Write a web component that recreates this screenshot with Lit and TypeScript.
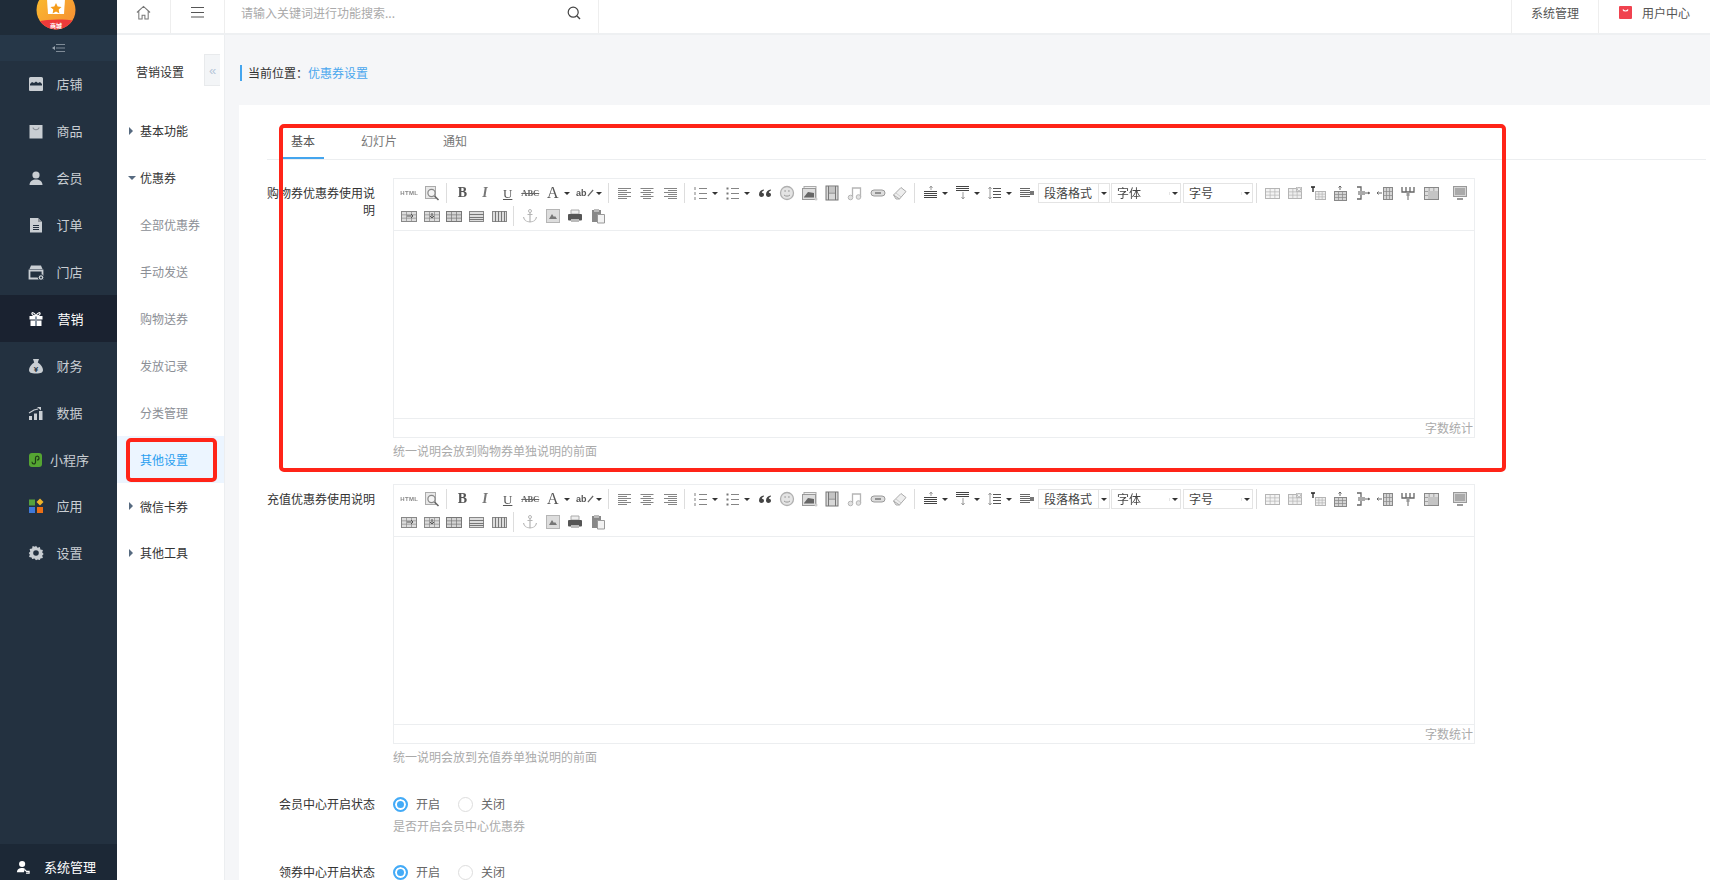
import { LitElement, html, css, svg } from "lit";
import { customElement } from "lit/decorators.js";

const C = "#c9ced3";
const D = "#233140";
const G = "#858585";

const sideIcons: Record<string, unknown> = {
  store: svg`<path d="M2.500 1h11A1.500 1.500 0 0 1 15 2.500V14a1 1 0 0 1-1 1H2a1 1 0 0 1-1-1V2.500A1.500 1.500 0 0 1 2.500 1z" fill="${C}"/><path d="M2 8l2-2 2 1 2-1.500 2 1.500 2-1 2 2v1.500H2z" fill="${D}"/>`,
  bag: svg`<path d="M1.500 2h13v13.500h-13z" fill="${C}"/><path d="M5 4.500c.5 3 5.500 3 6 0" fill="none" stroke="#8b9198" stroke-width="1.100"/>`,
  user: svg`<circle cx="8" cy="5" r="3.600" fill="${C}"/><path d="M1.500 15c.3-4 3-5.500 6.500-5.500S14.200 11 14.500 15z" fill="${C}"/>`,
  doc: svg`<path d="M2 1h8l4 4v10.500H2z" fill="${C}"/><path d="M10 1l4 4h-4z" fill="#8b9198"/><path d="M5 8.500h6M5 10.500h6M5 12.500h6" stroke="${D}" stroke-width="1"/>`,
  shop: svg`<path d="M3 1.500h10l1.500 3.500h-13z" fill="${C}"/><path d="M1.500 6.500h13v8h-13z" fill="none" stroke="${C}" stroke-width="1.800"/><circle cx="13" cy="13.500" r="2.800" fill="${C}" stroke="${D}"/><circle cx="13" cy="13.500" r="1" fill="${D}"/>`,
  gift: svg`<path d="M1.500 5h13v3.500h-13zM2.500 9.500h11V15h-11z" fill="#fff"/><path d="M7 5h2v10H7z" fill="#8a96a3"/><path d="M8 4.800C6 1 3.500 1 4 3c.2 1 2 1.800 4 1.800zm0 0c2-3.800 4.500-3.800 4-1.800-.2 1-2 1.800-4 1.800z" fill="none" stroke="#fff" stroke-width="1.200"/>`,
  money: svg`<path d="M5 1h6L9.800 4.500c3 1.800 5.200 5 5.200 7.500 0 2.500-2 3.500-7 3.500s-7-1-7-3.500c0-2.500 2.200-5.700 5.200-7.500z" fill="${C}"/><text x="8" y="13.500" text-anchor="middle" font-size="8" font-weight="700" font-family="Liberation Sans" fill="${D}">¥</text>`,
  chart: svg`<path d="M1 11h3v4H1zM6 8.500h3V15H6zM11 6h3.500v9H11z" fill="${C}"/><path d="M1 8l5-3 4-1" fill="none" stroke="${C}" stroke-width="1.200"/><path d="M9 2h4v3.500z" fill="${C}"/>`,
  mini: svg`<rect x="1" y="1" width="13" height="14" rx="3" fill="#55a532"/><path d="M4 9.800c0 2.800 3.500 2.800 3.500.3V6c0-2.600 3.500-2.600 3.500 0 0 1.500-1.200 2-2 2" fill="none" stroke="#1e3a18" stroke-width="1.200"/>`,
  apps: svg`<path d="M1 1.500h6v6H1z" fill="#56a13c"/><path d="M12 .5l3.500 3.500-3.500 3.500L8.500 4z" fill="#f0b429"/><path d="M1 9h6v6H1z" fill="#3f78d9"/><path d="M9 9h6v6H9z" fill="#ec6f16"/>`,
  gear: svg`<path d="M8 .8l1.500 2 2.400-.7.500 2.500 2.500.5-.7 2.400 1.500 1.500-1.500 1.500.7 2.400-2.500.5-.5 1.500-2.400-.4L8 15.200l-1.500-1.700-2.400.4-.5-1.500-2.500-.5.7-2.400L.8 8l1.500-1.500-.7-2.400 2.500-.5.5-2.500 2.400.7z" fill="${C}"/><circle cx="8" cy="8" r="2.800" fill="${D}"/>`,
  admin: svg`<circle cx="7" cy="4.500" r="3.500" fill="#fff"/><path d="M1 14c.3-4 2.600-5 6-5 1.500 0 2.500.3 3.300 1L9 14z" fill="#fff"/><path d="M10 11l2 2h3v2h-3.500" fill="none" stroke="#fff" stroke-width="1.300"/>`,
};

const hl = (ys: number[], x1: number, x2: number, c = G) =>
  svg`<path d="${ys.map((y) => `M${x1} ${y}H${x2}`).join("")}" stroke="${c}" stroke-width="1" fill="none"/>`;

const grid = (x: number, y: number, w: number, h: number, c = "#999", f = "#e6e6e6") =>
  svg`<rect x="${x}.5" y="${y}.5" width="${w}" height="${h}" fill="${f}" stroke="${c}"/><path d="M${x} ${y + h / 3 + 0.5}h${w}M${x} ${y + (2 * h) / 3 + 0.5}h${w}M${x + w / 3 + 0.5} ${y}v${h}M${x + (2 * w) / 3 + 0.5} ${y}v${h}" stroke="${c}" stroke-width=".7"/>`;

const tb: Record<string, unknown> = {
  preview: svg`<rect x="1.500" y="1.500" width="10" height="12" fill="#e8e8e8" stroke="#aaa"/><circle cx="7.500" cy="8" r="3.600" fill="#f4f4f4" stroke="#888" stroke-width="1.200"/><path d="M10.500 11l4 4" stroke="#666" stroke-width="1.600"/>`,
  left: svg`<path d="M1 3.500h13M1 5.500h9M1 7.500h13M1 9.500h9M1 11.500h13M1 13.500h9" stroke="${G}" fill="none"/>`,
  center: svg`<path d="M1.500 3.500h13M4 5.500h8M1.500 7.500h13M4 9.500h8M1.500 11.500h13M4 13.500h8" stroke="${G}" fill="none"/>`,
  right: svg`<path d="M2 3.500h13M6 5.500h9M2 7.500h13M6 9.500h9M2 11.500h13M6 13.500h9" stroke="${G}" fill="none"/>`,
  ol: svg`${hl([3.500, 8.500, 13.500], 6, 14)}<path d="M2 2v3M2 7v3M2 12v3" stroke="#aaa" stroke-width="1.500"/>`,
  ul: svg`${hl([3.500, 8.500, 13.500], 6, 14)}<path d="M1.500 3.500h2M1.500 8.500h2M1.500 13.500h2" stroke="#777" stroke-width="2"/>`,
  quote: svg`<path d="M7 4.500C4 5 2 6.500 2 9.500 2 11 3 12 4.300 12S7 11 7 9.700 6 7.500 4.800 7.700C5 6.500 6 5.800 7 5.500zM14 4.500C11 5 9 6.500 9 9.500 9 11 10 12 11.300 12S14 11 14 9.700 13 7.500 11.800 7.700C12 6.500 13 5.800 14 5.500z" fill="#444"/>`,
  smile: svg`<circle cx="8" cy="8" r="6.500" fill="#e4e4e4" stroke="#b0b0b0" stroke-width="1.300"/><path d="M5.500 6h1.200M9.300 6h1.200" stroke="#999" stroke-width="1.500"/><path d="M5 10c1.500 1.500 4.500 1.500 6 0" fill="none" stroke="#999"/>`,
  image: svg`<rect x="2" y="1.500" width="12" height="11" fill="#eee" stroke="#aaa"/><rect x="0.500" y="3.500" width="13" height="11" fill="#ddd" stroke="#999"/><path d="M2 12l4-5 6 1v4.500H2z" fill="#666"/><circle cx="14" cy="14" r="1.500" fill="#ccc"/>`,
  film: svg`<rect x="2" y="1" width="12" height="14" fill="#d8d8d8" stroke="#777"/><path d="M4.500 1v14M11.500 1v14M4.500 8h7" stroke="#777"/><rect x="5" y="2" width="6" height="5.500" fill="#c4c4c4"/>`,
  music: svg`<path d="M5.500 12V3h8v9" fill="none" stroke="#b5b5b5" stroke-width="1.300"/><circle cx="3.500" cy="12.500" r="2.300" fill="#e2e2e2" stroke="#b5b5b5"/><circle cx="11.500" cy="12" r="2.300" fill="#e2e2e2" stroke="#b5b5b5"/>`,
  link: svg`<rect x="1" y="5" width="14" height="6" rx="3" fill="#ddd" stroke="#999"/><path d="M5 8h6" stroke="#777" stroke-width="1.500"/>`,
  eraser: svg`<path d="M1.500 10L9 2.500l5 4L7.500 14H4z" fill="#eee" stroke="#aaa"/><path d="M1.500 10l6 4" stroke="#aaa"/><path d="M4 8l5 4" stroke="#ccc"/>`,
  rowspace: svg`<path d="M8 1v4M6.500 3L8 1l1.500 2" stroke="#999" fill="none"/>${hl([6.500, 8.500, 10.500, 12.500], 1, 14, "#444")}`,
  topspace: svg`${hl([1.500, 3.500, 5.500], 1, 14, "#444")}<path d="M8 7v7M6.500 12L8 14l1.500-2" stroke="#999" fill="none"/>`,
  line: svg`<path d="M3 2v12M1.500 4L3 2l1.500 2M1.500 12L3 14l1.500-2" stroke="#999" fill="none"/>${hl([3.500, 6.500, 9.500, 12.500], 6, 14, "#555")}`,
  indent: svg`${hl([3.500, 5.500, 7.500, 9.500, 11.500], 1, 11, "#666")}<path d="M11 6h4v4h-4z" fill="#777"/>`,
  t1: grid(1, 3, 14, 10, "#b5b5b5", "#f4f4f4"),
  t2: svg`${grid(1, 3, 13, 10, "#b5b5b5", "#eee")}<path d="M9 2h6v5H9z" fill="#bbb"/><path d="M10.500 3l3 2.500m0-2.500l-3 2.500" stroke="#fff"/>`,
  t3: svg`${grid(5, 6, 10, 8, "#b5b5b5", "#eee")}<path d="M1 2h4M3 2v5" stroke="#222" stroke-width="1.300"/>`,
  t4: svg`${grid(2, 6, 12, 9, "#888", "#d4d4d4")}<path d="M8 5V1M6.500 2.500L8 1l1.500 1.500" stroke="#666" fill="none"/>`,
  t5: svg`<path d="M2 2h4v12H2" fill="none" stroke="#666" stroke-width="1.300"/><path d="M3 6h7v4H3z" fill="#aaa"/><path d="M10 8h5" stroke="#666"/><path d="M15 8l-2-1.500v3z" fill="#666"/>`,
  t6: svg`${grid(6, 2, 9, 12, "#888", "#d4d4d4")}<path d="M0 8h5M1.500 6.500L0 8l1.500 1.500" stroke="#666" fill="none"/>`,
  t7: svg`<path d="M2 2v5h12V2M6 2v5M10 2v5" fill="none" stroke="#666" stroke-width="1.300"/><path d="M6.500 7h3v4h-3z" fill="#999"/><path d="M8 11v4" stroke="#666"/>`,
  t8: svg`${grid(1, 2, 14, 12, "#888", "#ddd")}<rect x="5" y="6" width="10" height="8" fill="#c4c4c4"/>`,
  t9: svg`<rect x="1.500" y="1.500" width="13" height="10" fill="#d4d4d4" stroke="#999"/><rect x="3" y="3" width="10" height="7" fill="#aaa"/><path d="M5 14h6" stroke="#999" stroke-width="2"/>`,
  r1: svg`${grid(0, 3, 15, 10, "#888", "#ddd")}<path d="M6 8h6M10 6l2 2-2 2" stroke="#555" fill="#fff"/>`,
  r2: svg`${grid(0, 3, 15, 10, "#888", "#ddd")}<path d="M8 5v5M6 8l2 2 2-2" stroke="#555" fill="#fff"/>`,
  r3: grid(0, 3, 15, 10, "#777", "#d4d4d4"),
  r4: svg`<rect x=".5" y="3.500" width="14" height="10" fill="#ddd" stroke="#888"/>${hl([6.500, 9.500, 11.500], 0, 15, "#777")}`,
  r5: svg`<rect x=".5" y="3.500" width="14" height="10" fill="#ddd" stroke="#888"/><path d="M3.500 3v11M6.500 3v11M9.500 3v11M12.500 3v11" stroke="#777"/>`,
  anchor: svg`<circle cx="8" cy="3" r="1.500" fill="none" stroke="#b5b5b5"/><path d="M8 4.500V14M5.500 6.500h5M1.500 9c.5 3 3.500 5 6.500 5s6-2 6.500-5" fill="none" stroke="#b5b5b5" stroke-width="1.200"/>`,
  pic: svg`<rect x="1.500" y="1.500" width="13" height="13" fill="#ddd" stroke="#b5b5b5"/><path d="M4 11l3-5 2 3 1-1 2 3z" fill="#777"/>`,
  print: svg`<path d="M4 2h8v4H4z" fill="#eee" stroke="#aaa"/><rect x="1" y="6" width="14" height="6.500" rx="1" fill="#555"/><path d="M4 11h8v3H4z" fill="#bbb"/>`,
  paste: svg`<rect x="2" y="2" width="9" height="12" fill="#888"/><rect x="4" y="1" width="5" height="3" fill="#bbb"/><path d="M7.500 6.500h7V15h-7z" fill="#f2f2f2" stroke="#999"/>`,
};

type Item = string;
const row1: Item[] = ["html","b:preview","s","tB","tI","tU","tS","c:A","c:ab","s","b:left","b:center","b:right","s","i:ol","i:ul","b:quote","b:smile","b:image","b:film","b:music","b:link","b:eraser","s","i:rowspace","i:topspace","i:line","b:indent","sel:段落格式:a","sel:字体:b","sel:字号:c","s","b:t1","b:t2","b:t3","b:t4","b:t5","b:t6","b:t7","b:t8","last:t9"];
const row2: Item[] = ["b:r1","b:r2","b:r3","b:r4","b:r5","s","b:anchor","b:pic","b:print","b:paste"];

const ic = (n: string) => html`<svg class="ti" viewBox="0 0 16 16">${tb[n]}</svg>`;
const caret = html`<i class="caret"></i>`;

function item(it: Item) {
  const [k, a, b] = it.split(":");
  switch (k) {
    case "html": return html`<span class="b"><span class="htm">HTML</span></span>`;
    case "s": return html`<span class="sp"><i></i></span>`;
    case "tB": return html`<span class="b"><span class="g gb">B</span></span>`;
    case "tI": return html`<span class="b"><span class="g gi">I</span></span>`;
    case "tU": return html`<span class="b"><span class="g gu">U</span></span>`;
    case "tS": return html`<span class="b"><span class="abc">ABC</span></span>`;
    case "c":
      return a === "A"
        ? html`<span class="c"><span class="b"><span class="g ga">A</span></span>${caret}</span>`
        : html`<span class="c"><span class="b abw"><span class="abx">ab</span><svg class="slash" viewBox="0 0 8 10"><path d="M1 8L7 1" stroke="#666" stroke-width="1.400"/></svg></span>${caret}</span>`;
    case "i": return html`<span class="c"><span class="b">${ic(a)}</span>${caret}</span>`;
    case "sel": return html`<span class="sel ${b}"><span class="sl">${a}</span><span class="sa"><i class="caret"></i></span></span>`;
    case "last": return html`<span class="b lastb">${ic(a)}</span>`;
    default: return html`<span class="b">${ic(a)}</span>`;
  }
}

const mainMenu: [string, string, boolean?][] = [
  ["store", "店铺"], ["bag", "商品"], ["user", "会员"], ["doc", "订单"], ["shop", "门店"],
  ["gift", "营销", true], ["money", "财务"], ["chart", "数据"], ["mini", "小程序"], ["apps", "应用"], ["gear", "设置"],
];

const subMenu: [string, string][] = [
  ["基本功能", "r"], ["优惠券", "d"], ["全部优惠券", "s"], ["手动发送", "s"], ["购物送券", "s"],
  ["发放记录", "s"], ["分类管理", "s"], ["其他设置", "a"], ["微信卡券", "r"], ["其他工具", "r"],
];

@customElement("app-root")
export class AppRoot extends LitElement {
  static styles = css`
    :host { display: block; width: 1710px; height: 880px; overflow: hidden; position: relative; background: #f5f6f8;
      font-family: "Noto Sans CJK SC", "Liberation Sans", sans-serif; font-size: 12px; color: #333; }
    * { box-sizing: border-box; }
    i { font-style: normal; }
    .app { display: flex; height: 880px; }
    .side { width: 117px; flex: none; background: #233140; display: flex; flex-direction: column; }
    .logo { height: 35px; overflow: hidden; background: #1f2c39; display: flex; justify-content: center; padding-right: 5px; }
    .logo svg { width: 40px; height: 40px; margin-top: -10px; flex: none; }
    .strip { height: 26px; background: #263748; display: flex; align-items: center; justify-content: center; }
    .strip svg { width: 14px; height: 10px; }
    .mi { height: 46.9px; display: flex; align-items: center; padding-left: 28px; font-size: 13px; color: #c9ced3; flex: none; }
    .mi svg { width: 16px; height: 16px; flex: none; }
    .mi span { width: 53px; margin-left: -1px; text-align: center; line-height: 18px; }
    .mi.on { background: #1a2230; color: #fff; }
    .mi.on span { padding-left: 2px; }
    .foot { margin-top: auto; height: 36px; background: #1c2836; color: #fff; display: flex; align-items: center; padding: 10px 0 0 16px; font-size: 13px; }
    .foot svg { width: 14px; height: 14px; flex: none; }
    .foot span { margin-left: 14px; line-height: 18px; }
    .right { flex: 1; min-width: 0; display: flex; flex-direction: column; }
    .top { height: 35px; background: #fff; border-bottom: 2px solid #eef0f2; display: flex; flex: none; }
    .cell { border-right: 1px solid #eee; display: flex; align-items: center; justify-content: center; flex: none; padding-bottom: 8px; }
    .home { width: 54px; } .ham { width: 54px; }
    .home svg, .ham svg { width: 15px; height: 15px; }
    .search { width: 374px; justify-content: space-between; padding: 0 17px 8px 16px; color: #aaa; }
    .search svg { width: 14px; height: 14px; }
    .grow { flex: 1; }
    .tr { display: flex; align-items: center; justify-content: center; color: #555; border-left: 1px solid #eee; flex: none; padding-bottom: 9px; }
    .tr.a { width: 87px; } .tr.b2 { width: 112px; }
    .tr svg { width: 13px; height: 13px; margin-right: 10px; }
    .body { flex: 1; display: flex; min-height: 0; }
    .sub { width: 108px; flex: none; background: #fff; border-right: 1px solid #eceef0; }
    .subh { height: 73px; display: flex; align-items: center; padding-left: 19px; color: #333; position: relative; }
    .fold { position: absolute; left: 87px; top: 19px; width: 16px; height: 32px; background: #f3f5f7; border: 1px solid #e8eaec; border-right: 0; color: #b6c6d8; display: flex; align-items: center; justify-content: center; font-size: 13px; line-height: 1; font-family: "Liberation Sans"; }
    .si { height: 46.9px; display: flex; align-items: center; padding-left: 23px; line-height: 18px; color: #333; position: relative; }
    .si.s { color: #8c8f96; }
    .si.a { color: #2a9ff0; background: #ecf5ff; }
    .si.r::before { content: ""; position: absolute; left: 12px; top: 19px; border: 4px solid transparent; border-left: 4px solid #566a80; border-right: 0; }
    .si.d::before { content: ""; position: absolute; left: 11px; top: 21px; border: 4px solid transparent; border-top: 4px solid #566a80; border-bottom: 0; }
    .mainw { flex: 1; min-width: 0; display: flex; flex-direction: column; }
    .crumb { height: 70px; flex: none; padding: 6px 0 0 15px; display: flex; align-items: center; }
    .crumb .t { border-left: 2px solid #44a5ee; padding-left: 6px; line-height: 16px; }
    .crumb em { font-style: normal; color: #4aa7ee; }
    .main { flex: 1; margin-left: 14px; background: #fff; padding: 0 4px 0 28px; overflow: hidden; }
    .tabs { height: 55px; border-bottom: 1px solid #eceef0; display: flex; padding: 19px 0 0 15px; }
    .tab { height: 35px; padding: 0 9px; margin-right: 28px; line-height: 33px; color: #777; }
    .tab.on { color: #555; border-bottom: 2px solid #44a5ee; }
    .form { padding-top: 18px; }
    .grp { display: grid; grid-template-columns: 108px 1082px; column-gap: 18px; margin-bottom: 24px; }
    .grp.e2 { margin-bottom: 28px; }
    .lb { text-align: right; line-height: 17px; padding-top: 6px; color: #333; }
    .ed { border: 1px solid #eceef0; height: 260px; display: flex; flex-direction: column; }
    .tbr { height: 52px; border-bottom: 1px solid #eceef0; padding: 3px 0 0 4px; flex: none; }
    .rw { display: flex; height: 22.500px; align-items: center; }
    .b { width: 22.6px; flex: none; height: 20px; display: flex; align-items: center; justify-content: center; color: #555; filter: blur(.3px); }
    .lastb { width: 30px; padding-left: 7px; }
    .ti { width: 16px; height: 16px; display: block; }
    .htm { font: 700 6px "Liberation Sans"; color: #888; letter-spacing: .3px; }
    .g { font-family: "Liberation Serif"; line-height: 1; color: #555; }
    .gb { font-weight: 700; font-size: 14px; }
    .gi { font-style: italic; font-size: 14px; font-weight: 700; color: #777; }
    .gu { font-size: 13px; text-decoration: underline; }
    .ga { font-size: 16px; }
    .abc { font: 700 8.500px "Liberation Serif"; color: #666; text-decoration: line-through; }
    .abx { font: 700 9px "Liberation Sans"; color: #555; }
    .slash { width: 7px; height: 9px; flex: none; }
    .abw { gap: 0; }
    .c { width: 32px; flex: none; display: flex; align-items: center; }
    .caret { display: block; width: 0; height: 0; border: 3px solid transparent; border-top: 3px solid #333; border-bottom: 0; }
    .sp { width: 8px; flex: none; height: 20px; display: flex; justify-content: center; margin-left: -1px; margin-right: 1px; }
    .sp i { display: block; width: 1px; height: 100%; background: #ddd; }
    .sel { height: 20px; background: #fff; border: 1px solid #e4e4e4; display: flex; flex: none; line-height: 18px; color: #444; }
    .sel.a { width: 72px; margin-right: 1px; }
    .sel.b { width: 70px; margin-right: 2px; }
    .sel.c { width: 70px; }
    .sl { flex: 1; padding-left: 5px; }
    .sa { width: 11px; border-left: 1px solid #e4e4e4; display: flex; align-items: center; justify-content: center; }
    .edit { flex: 1; border-bottom: 1px solid #eceef0; }
    .stat { height: 18px; flex: none; text-align: right; padding-right: 1px; color: #aaa; line-height: 18px; }
    .help { color: #aaa; line-height: 18px; }
    .ed + .help { margin-top: 4px; }
    .grp.rad { margin-bottom: 27px; }
    .radios { display: flex; height: 20px; align-items: center; color: #666; line-height: 20px; }
    .radios + .help { margin-top: 3px; }
    .rd { width: 15px; height: 15px; border-radius: 50%; border: 1px solid #ddd; background: #fff; margin-right: 8px; flex: none; }
    .rd.on { border: 2px solid #44abf7; background: #44abf7; box-shadow: inset 0 0 0 2px #fff; }
    .rt { width: 42px; }
    .lb2 { text-align: right; line-height: 20px; color: #333; }
    .box { position: absolute; border: 4px solid #ff2418; border-radius: 5px; pointer-events: none; }
    .box.m { left: 279px; top: 124px; width: 1227px; height: 348px; }
    .box.n { left: 126px; top: 438px; width: 91px; height: 44px; }
  `;

  editor() {
    return html`<div class="ed">
      <div class="tbr">
        <div class="rw">${row1.map(item)}</div>
        <div class="rw">${row2.map(item)}</div>
      </div>
      <div class="edit"></div>
      <div class="stat">字数统计</div>
    </div>`;
  }

  radios() {
    return html`<div class="radios">
      <span class="rd on"></span><span class="rt">开启</span>
      <span class="rd"></span><span>关闭</span>
    </div>`;
  }

  render() {
    return html`<div class="app">
      <aside class="side">
        <div class="logo">
          <svg viewBox="0 0 40 40">
            <defs>
              <linearGradient id="lg" x1="0" y1="0" x2="1" y2="1"><stop offset="0" stop-color="#fbc02d"/><stop offset="1" stop-color="#f58a34"/></linearGradient>
              <clipPath id="lc"><circle cx="20" cy="20" r="19.500"/></clipPath>
            </defs>
            <g clip-path="url(#lc)">
              <rect width="40" height="40" fill="url(#lg)"/>
              <path d="M0 32c14-3 26-3 40-1v9H0z" fill="#ee3a3a"/>
              <path d="M11 9h18l-1 15H12z" fill="#fff"/>
              <path d="M20 13l1.700 3.500 3.800.5-2.800 2.600.7 3.800-3.400-1.800-3.400 1.800.7-3.800-2.800-2.600 3.800-.5z" fill="#f59c1a"/>
              <text x="20" y="37.500" text-anchor="middle" font-size="6" font-weight="700" fill="#fff" font-family="Noto Sans CJK SC">商城</text>
            </g>
          </svg>
        </div>
        <div class="strip"><svg viewBox="0 0 14 10"><path d="M0 5l3-2v4z" fill="#9aa5b0"/><path d="M4 1.500h9M4 5h9M4 8.500h9" stroke="#7f8b97" stroke-width="1"/></svg></div>
        ${mainMenu.map(([i, t, on]) => html`<div class="mi ${on ? "on" : ""}"><svg viewBox="0 0 16 16">${sideIcons[i]}</svg><span>${t}</span></div>`)}
        <div class="foot"><svg viewBox="0 0 16 16">${sideIcons.admin}</svg><span>系统管理</span></div>
      </aside>
      <div class="right">
        <header class="top">
          <div class="cell home"><svg viewBox="0 0 16 16"><path d="M1 8l7-6.500L15 8M3 6.500V15h3.500v-4h3v4H13V6.500" fill="none" stroke="#777" stroke-width="1.100"/></svg></div>
          <div class="cell ham"><svg viewBox="0 0 15 15"><path d="M1 2.500h13M1 7.500h13M1 12h13" stroke="#555" stroke-width="1.100"/></svg></div>
          <div class="cell search"><span>请输入关键词进行功能搜索...</span><svg viewBox="0 0 14 14"><circle cx="6.200" cy="6.200" r="5" fill="none" stroke="#444" stroke-width="1.200"/><path d="M10 10l3 3" stroke="#444" stroke-width="1.400"/></svg></div>
          <div class="grow"></div>
          <div class="tr a">系统管理</div>
          <div class="tr b2"><svg viewBox="0 0 13 13"><rect width="13" height="13" rx="1" fill="#f0424f"/><path d="M4 3.500c.5 2 4.500 2 5 0" fill="none" stroke="#fff" stroke-width="1.100"/></svg>用户中心</div>
        </header>
        <div class="body">
          <nav class="sub">
            <div class="subh">营销设置<span class="fold">«</span></div>
            ${subMenu.map(([t, k]) => html`<div class="si ${k}">${t}</div>`)}
          </nav>
          <div class="mainw">
            <div class="crumb"><div class="t">当前位置：<em>优惠券设置</em></div></div>
            <main class="main">
              <div class="tabs">
                <div class="tab on">基本</div><div class="tab">幻灯片</div><div class="tab">通知</div>
              </div>
              <div class="form">
                <div class="grp"><div class="lb">购物券优惠券使用说明</div><div>${this.editor()}<div class="help">统一说明会放到购物券单独说明的前面</div></div></div>
                <div class="grp e2"><div class="lb">充值优惠券使用说明</div><div>${this.editor()}<div class="help">统一说明会放到充值券单独说明的前面</div></div></div>
                <div class="grp rad"><div class="lb2">会员中心开启状态</div><div>${this.radios()}<div class="help">是否开启会员中心优惠券</div></div></div>
                <div class="grp rad"><div class="lb2">领券中心开启状态</div><div>${this.radios()}</div></div>
              </div>
            </main>
          </div>
        </div>
      </div>
    </div>
    <div class="box m"></div>
    <div class="box n"></div>`;
  }
}
